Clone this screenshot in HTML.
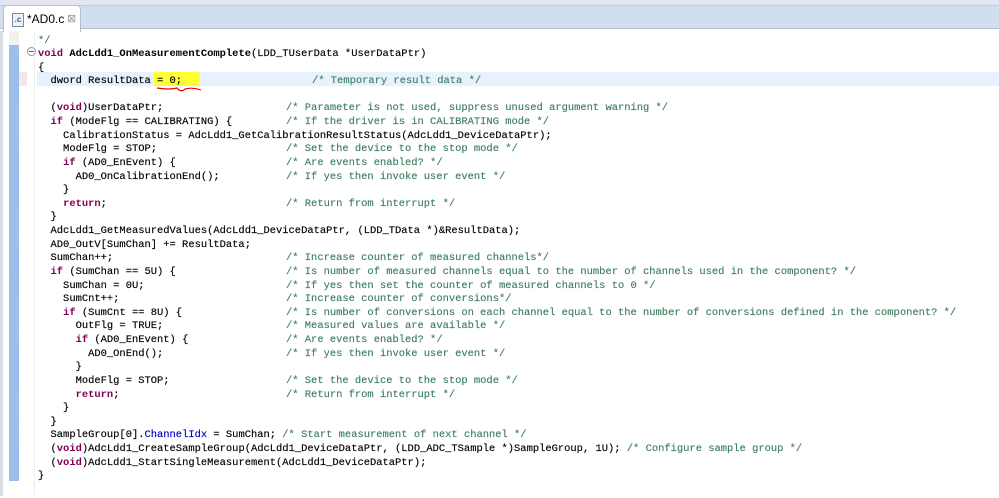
<!DOCTYPE html>
<html><head><meta charset="utf-8"><style>
body{margin:0;width:999px;height:496px;background:#fff;position:relative;overflow:hidden;font-family:"Liberation Mono",monospace;}
.top1{position:absolute;left:0;top:0;width:999px;height:5px;background:#e3e6f2;}
.top2{position:absolute;left:0;top:5px;width:999px;height:22px;background:#cfdff0;border-top:1px solid #c5ccda;border-bottom:1px solid #b4c0d0;}
.tab{position:absolute;left:3px;top:5px;width:76px;height:26px;background:#fff;border:1px solid #b4c0d0;border-bottom:none;border-radius:4px 4px 0 0;}
.tab .ic{position:absolute;left:8px;top:7px;width:10px;height:12px;border:1px solid #7a8aa0;background:#eef2f8;font:bold 8px "Liberation Sans",sans-serif;color:#3a5a8a;line-height:12px;text-align:center;}
.tab .t{position:absolute;left:23px;top:6px;font:12px "Liberation Sans",sans-serif;color:#000;}
.tab .x{position:absolute;left:63px;top:6px;font:11px "Liberation Sans",sans-serif;color:#999;}
.lstrip{position:absolute;left:0;top:31px;width:3px;height:465px;background:#d8dce3;}
.ruler{position:absolute;left:9px;top:45px;width:10px;height:436px;background:#a9c8ef;background-image:repeating-linear-gradient(45deg,#8fb4e6 0 1px,transparent 1px 2px);}
.ruler0{position:absolute;left:9px;top:31px;width:10px;height:14px;background:#f2f2f2;}
.pink{position:absolute;left:19px;top:72px;width:8px;height:14px;background:#f3e6ef;}
.gline{position:absolute;left:34px;top:31px;width:1px;height:465px;background:#eee;}
.cur{position:absolute;left:37px;top:72px;width:962px;height:14px;background:#e8f2fe;}
.yel{position:absolute;left:154px;top:72px;width:46px;height:14px;background:#ffff33;}
.fold{position:absolute;left:27px;top:47px;width:7px;height:7px;border:1px solid #8a96a8;border-radius:50%;}
.fold:after{content:"";position:absolute;left:1px;top:3px;width:5px;height:1px;background:#666;}
.w{position:absolute;left:0;top:1.5px;width:999px;height:496px;}
.l{position:absolute;left:38px;height:14px;line-height:14px;font-size:10.45px;white-space:pre;color:#000;-webkit-text-stroke:0.15px #000;}
.c{position:absolute;height:14px;line-height:14px;font-size:10.45px;white-space:pre;color:#3f7f5f;-webkit-text-stroke:0.15px #3f7f5f;}
.k{color:#7f0055;font-weight:bold;-webkit-text-stroke:0;}
.g{color:#3f7f5f;-webkit-text-stroke:0.15px #3f7f5f;}
.b{color:#0000c0;-webkit-text-stroke:0.15px #0000c0;}
.f{font-weight:bold;-webkit-text-stroke:0;}
</style></head><body>
<div class="top1"></div><div class="top2"></div>
<div class="tab"><div class="ic">.c</div><div class="t">*AD0.c</div><div class="x">⊠</div></div>
<div class="lstrip"></div><div class="ruler0"></div><div class="ruler"></div><div class="pink"></div><div class="gline"></div>
<div class="cur"></div><div class="yel"></div>
<svg style="position:absolute;left:155px;top:85px" width="50" height="10"><path d="M2 3 Q14 5 22 3 Q26 8 30 4 Q38 2 46 5" stroke="#e00" stroke-width="1.2" fill="none"/></svg>
<div class="fold"></div>
<div class="w">
<div class="l" style="top:32px"><span class="g">*/</span></div>
<div class="l" style="top:45.6px"><span class="k">void</span> <span class="f">AdcLdd1_OnMeasurementComplete</span>(LDD_TUserData *UserDataPtr)</div>
<div class="l" style="top:59.2px">{</div>
<div class="l" style="top:72.9px">  dword ResultData = 0;</div>
<div class="c" style="left:312px;top:72.9px">/* Temporary result data */</div>
<div class="l" style="top:99.9px">  (<span class="k">void</span>)UserDataPtr;</div>
<div class="c" style="left:286px;top:99.9px">/* Parameter is not used, suppress unused argument warning */</div>
<div class="l" style="top:113.5px">  <span class="k">if</span> (ModeFlg == CALIBRATING) {</div>
<div class="c" style="left:286px;top:113.5px">/* If the driver is in CALIBRATING mode */</div>
<div class="l" style="top:127.1px">    CalibrationStatus = AdcLdd1_GetCalibrationResultStatus(AdcLdd1_DeviceDataPtr);</div>
<div class="l" style="top:140.7px">    ModeFlg = STOP;</div>
<div class="c" style="left:286px;top:140.7px">/* Set the device to the stop mode */</div>
<div class="l" style="top:154.4px">    <span class="k">if</span> (AD0_EnEvent) {</div>
<div class="c" style="left:286px;top:154.4px">/* Are events enabled? */</div>
<div class="l" style="top:168px">      AD0_OnCalibrationEnd();</div>
<div class="c" style="left:286px;top:168px">/* If yes then invoke user event */</div>
<div class="l" style="top:181.6px">    }</div>
<div class="l" style="top:195.2px">    <span class="k">return</span>;</div>
<div class="c" style="left:286px;top:195.2px">/* Return from interrupt */</div>
<div class="l" style="top:208.9px">  }</div>
<div class="l" style="top:222.5px">  AdcLdd1_GetMeasuredValues(AdcLdd1_DeviceDataPtr, (LDD_TData *)&amp;ResultData);</div>
<div class="l" style="top:236.1px">  AD0_OutV[SumChan] += ResultData;</div>
<div class="l" style="top:249.7px">  SumChan++;</div>
<div class="c" style="left:286px;top:249.7px">/* Increase counter of measured channels*/</div>
<div class="l" style="top:263.4px">  <span class="k">if</span> (SumChan == 5U) {</div>
<div class="c" style="left:286px;top:263.4px">/* Is number of measured channels equal to the number of channels used in the component? */</div>
<div class="l" style="top:277px">    SumChan = 0U;</div>
<div class="c" style="left:286px;top:277px">/* If yes then set the counter of measured channels to 0 */</div>
<div class="l" style="top:290.6px">    SumCnt++;</div>
<div class="c" style="left:286px;top:290.6px">/* Increase counter of conversions*/</div>
<div class="l" style="top:304.2px">    <span class="k">if</span> (SumCnt == 8U) {</div>
<div class="c" style="left:286px;top:304.2px">/* Is number of conversions on each channel equal to the number of conversions defined in the component? */</div>
<div class="l" style="top:317.9px">      OutFlg = TRUE;</div>
<div class="c" style="left:286px;top:317.9px">/* Measured values are available */</div>
<div class="l" style="top:331.5px">      <span class="k">if</span> (AD0_EnEvent) {</div>
<div class="c" style="left:286px;top:331.5px">/* Are events enabled? */</div>
<div class="l" style="top:345.1px">        AD0_OnEnd();</div>
<div class="c" style="left:286px;top:345.1px">/* If yes then invoke user event */</div>
<div class="l" style="top:358.7px">      }</div>
<div class="l" style="top:372.4px">      ModeFlg = STOP;</div>
<div class="c" style="left:286px;top:372.4px">/* Set the device to the stop mode */</div>
<div class="l" style="top:386px">      <span class="k">return</span>;</div>
<div class="c" style="left:286px;top:386px">/* Return from interrupt */</div>
<div class="l" style="top:399.6px">    }</div>
<div class="l" style="top:413.2px">  }</div>
<div class="l" style="top:426.9px">  SampleGroup[0].<span class="b">ChannelIdx</span> = SumChan; <span class="g">/* Start measurement of next channel */</span></div>
<div class="l" style="top:440.5px">  (<span class="k">void</span>)AdcLdd1_CreateSampleGroup(AdcLdd1_DeviceDataPtr, (LDD_ADC_TSample *)SampleGroup, 1U); <span class="g">/* Configure sample group */</span></div>
<div class="l" style="top:454.1px">  (<span class="k">void</span>)AdcLdd1_StartSingleMeasurement(AdcLdd1_DeviceDataPtr);</div>
<div class="l" style="top:467.7px">}</div>
</div>
</body></html>
